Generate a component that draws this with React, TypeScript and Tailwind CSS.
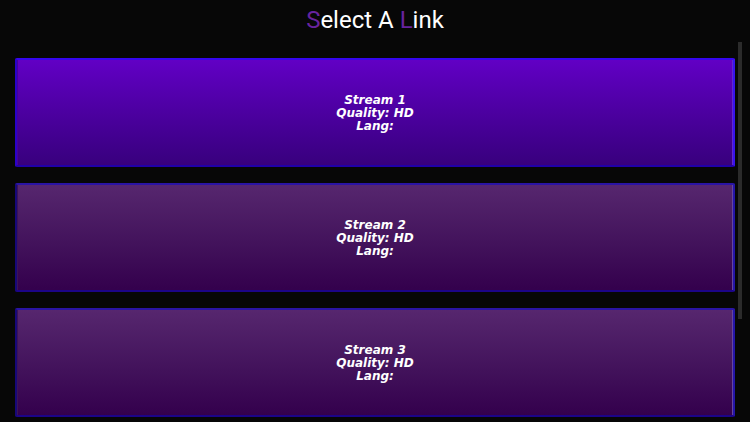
import clsx from "clsx";

const streams = [
  { id: 1, quality: "HD", lang: "" },
  { id: 2, quality: "HD", lang: "" },
  { id: 3, quality: "HD", lang: "" },
];

export default function App() {
  return (
    <div className="flex h-screen flex-col overflow-hidden bg-[#070707] text-white">
      <h1 className="py-1 text-center font-['Roboto',sans-serif] text-[24px] leading-8 font-normal">
        <span className="text-[#68239f]">S</span>elect A{" "}
        <span className="text-[#68239f]">L</span>ink
      </h1>

      <main className="flex min-h-0 flex-1 gap-[3px] pt-[2px] pr-2 pl-[15px]">
        {/* Links */}
        <div className="flex flex-1 flex-col gap-4 pt-4">
          {streams.map((stream, i) => (
            <button
              key={stream.id}
              type="button"
              className={clsx(
                "flex h-[109px] w-full shrink-0 flex-col items-center justify-center rounded-[2px] border-2 bg-linear-to-b bg-origin-border pt-px font-['DejaVu_Sans',sans-serif] text-[12px] leading-[13px] font-bold italic",
                i === 0
                  ? "border-t-[#3505ee] border-r-[#3a12ee] border-b-[#2100a8] border-l-[#2a02c8] from-[#6200c6] to-[#37007c] shadow-[inset_-1px_0_0_#6028d0,inset_1px_0_0_#48009c]"
                  : "border-t-[#2a14a4] border-r-[#2514a8] border-b-[#1c0488] border-l-[#170878] from-[#57276f] to-[#33004c] shadow-[inset_-1px_0_0_#6446a0,inset_1px_0_0_#3c1458]"
              )}
            >
              <span>Stream {stream.id}</span>
              <span>Quality: {stream.quality}</span>
              <span>Lang:{stream.lang}</span>
            </button>
          ))}
        </div>

        {/* Scroll position */}
        <div className="h-[73%] w-1 bg-[#2b2b2b]" />
      </main>
    </div>
  );
}
